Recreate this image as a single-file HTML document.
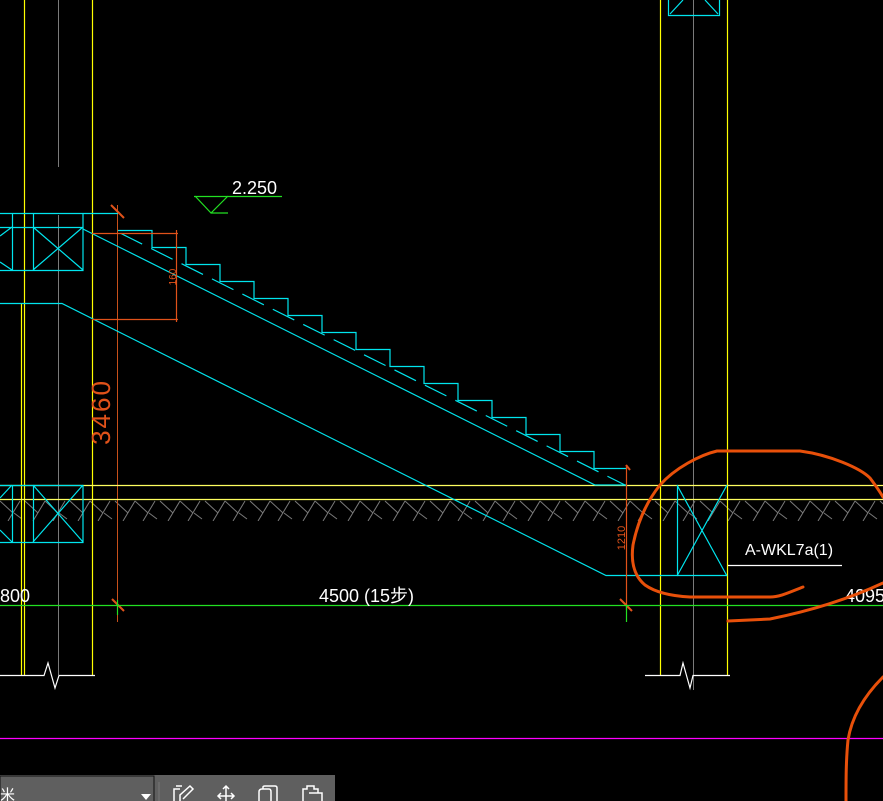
<!DOCTYPE html>
<html><head><meta charset="utf-8"><style>
html,body{margin:0;padding:0;background:#000;width:883px;height:801px;overflow:hidden}
svg{display:block}
text{font-family:"Liberation Sans","Noto Sans CJK SC",sans-serif}
</style></head><body>
<svg width="883" height="801" viewBox="0 0 883 801" xmlns="http://www.w3.org/2000/svg">
<defs>
<pattern id="h" x="0" y="499" width="45" height="22" patternUnits="userSpaceOnUse">
<path d="M0 2 L13 14 M20 2 L8 22 M25 2 L38 14 M45 2 L33 22 M14 14 L22 20" stroke="#7a7a7a" stroke-width="1" fill="none"/>
</pattern>
</defs>
<rect width="883" height="801" fill="#000"/>
<!-- hatch -->
<rect x="0" y="499" width="883" height="22" fill="url(#h)"/>
<g stroke="#7a7a7a" stroke-width="1" fill="none">
<line x1="58.5" y1="0" x2="58.5" y2="167"/>
<line x1="58.5" y1="215" x2="58.5" y2="675"/>
<line x1="693.5" y1="0" x2="693.5" y2="690"/>
</g>
<!-- orange ext line -->
<line x1="117.5" y1="205" x2="117.5" y2="622" stroke="#c8501a" stroke-width="1"/>
<!-- yellow -->
<g stroke="#ffff00" stroke-width="1.2" fill="none">
<line x1="24.5" y1="0" x2="24.5" y2="675"/>
<line x1="21.5" y1="303" x2="21.5" y2="675"/>
<line x1="92.5" y1="0" x2="92.5" y2="675"/>
<line x1="660.5" y1="0" x2="660.5" y2="675"/>
<line x1="727.5" y1="0" x2="727.5" y2="675"/>
<line x1="0" y1="485.5" x2="883" y2="485.5" stroke="#ffff60"/>
<line x1="0" y1="499.5" x2="883" y2="499.5" stroke="#ffff60"/>
</g>
<!-- cyan -->
<g stroke="#00e5ee" stroke-width="1.2" fill="none">
<path d="M668.5 0 V15.5 H719.5 V0 M670 14 L683 0 M718 14 L705 0"/>
<path d="M0 213.5 H118 M0 227.5 H83 M0 270.5 H83 V213 M12.5 213 V270 M33.5 213 V270 M33 227 L83 270 M33 270 L83 227 M0 236 L12 227 M0 262 L12 270"/>
<path d="M0 485.5 H83 V542.5 H0 M12.5 485 V542 M33.5 485 V542 M33 485 L83 542 M33 542 L83 485 M0 498 L12 485 M0 530 L12 542"/>
<path d="M677.5 485 V576 M677 485 L727 576 M677 576 L727 485"/>
<path d="M0 303.5 H62 L606 575.5 H727"/>
<path d="M83 229 L595 485 H627"/>
<path d="M118 230.5 H152 V247.5 H186 V264.5 H220 V281.5 H254 V298.5 H288 V315.5 H322 V332.5 H356 V349.5 H390 V366.5 H424 V383.5 H458 V400.5 H492 V417.5 H526 V434.5 H560 V451.5 H594 V468.5 H626"/>
<path d="M118 232 L627 486" stroke-dasharray="24 10" stroke-dashoffset="-3"/>
</g>
<!-- orange dims -->
<g stroke="#e0521a" stroke-width="1.2" fill="none">
<path d="M92 233.5 H178 M92 319.5 H178 M176.5 230 V322"/>
<path d="M626.5 465 V610"/>
<path d="M111 205 L124 218 M112 599 L124 611 M620 599 L632 611" stroke-width="2"/>
<line x1="626" y1="465" x2="630" y2="470" stroke-width="2"/>
</g>
<text transform="translate(176,277) rotate(-90)" fill="#e0521a" font-size="10" text-anchor="middle">160</text>
<text transform="translate(110,412) rotate(-90)" fill="#e0521a" font-size="26" text-anchor="middle" letter-spacing="2">3460</text>
<text transform="translate(625,538) rotate(-90)" fill="#e0521a" font-size="11" text-anchor="middle">1210</text>
<!-- green -->
<g stroke="#22e022" stroke-width="1.2" fill="none">
<line x1="0" y1="605.5" x2="883" y2="605.5"/>
<line x1="117.5" y1="600" x2="117.5" y2="615"/>
<line x1="626.5" y1="605" x2="626.5" y2="622"/>
<path d="M194 196.5 H282 M195 196 L211 213 L228 196 M211 213 H228"/>
</g>
<g fill="#fff" font-size="18">
<text x="232" y="194">2.250</text>
<text x="0" y="602">800</text>
<text x="319" y="602">4500 (15步)</text>
<text x="845" y="602">4095</text>
<text x="745" y="555" font-size="16">A-WKL7a(1)</text>
</g>
<g stroke="#fff" stroke-width="1.2" fill="none">
<line x1="728" y1="565.5" x2="842" y2="565.5"/>
<path d="M0 675.5 H44 L48 663 L55 688 L59 675.5 H95"/>
<path d="M645 675.5 H680 L683 663 L690 688 L693 675.5 H730"/>
</g>
<!-- magenta -->
<line x1="0" y1="738.5" x2="883" y2="738.5" stroke="#ff00ff" stroke-width="1.2"/>
<!-- freehand -->
<g stroke="#e8500a" stroke-width="3" fill="none" stroke-linecap="round">
<path d="M803 587 C790 592 780 597 770 597 L690 597 C670 596 655 592 645 585 C633 575 631 560 633 545 C638 520 648 500 660 485 C675 468 700 455 717 451 L800 451 C830 455 860 468 870 478 C876 486 880 492 883 497"/>
<path d="M728 621 L770 619 C800 613 840 603 883 583"/>
<path d="M883 677 C865 695 852 715 848 740 C846 760 846 780 846 801"/>
</g>
<!-- toolbar -->
<rect x="0" y="775" width="335" height="26" fill="#5f5f5f"/>
<rect x="0" y="776" width="154" height="26" fill="#5f5f5f" stroke="#111" stroke-width="1"/>
<text x="0" y="800" fill="#fff" font-size="15">米</text>
<path d="M141 794 L151 794 L146 800 Z" fill="#fff"/>
<line x1="159" y1="782" x2="159" y2="801" stroke="#777"/>
<g stroke="#fff" stroke-width="1.5" fill="none">
<path d="M174 801 V789 H180 M176 786 H182 M180 801 V795 L190 786 L193 789 L183 799"/>
<path d="M226 786 V801 M218 796 H234 M223 789 L226 786 L229 789 M221 793 L218 796 L221 799 M231 793 L234 796 L231 799"/>
<path d="M259 801 V792 Q259 789 262 789 H269 Q271 789 271 792 V801 M263 789 V787 Q263 786 265 786 H275 Q277 786 277 788 V801"/>
<path d="M303 801 V789 H307 V786 H314 V789 H318 V793 M309 793 H322 V801"/>
</g>
</svg>
</body></html>
